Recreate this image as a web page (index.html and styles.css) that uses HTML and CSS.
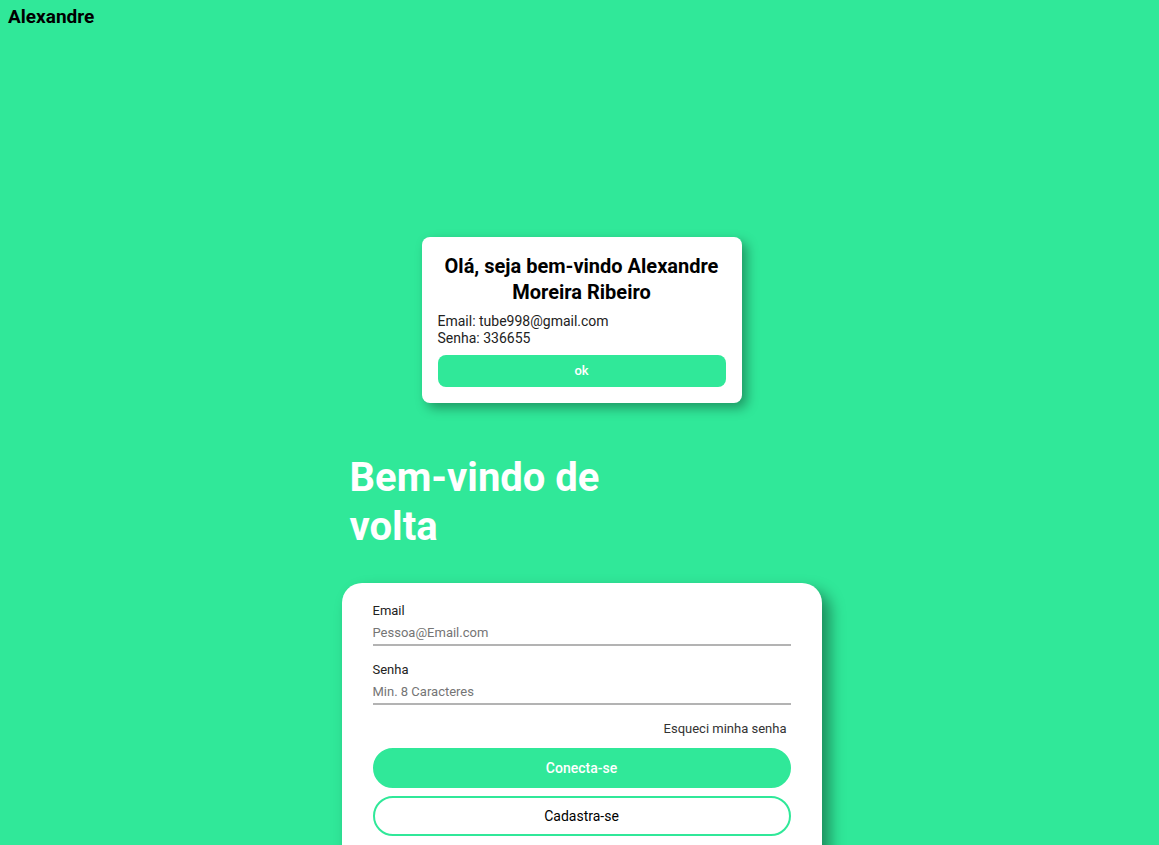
FILE: index.html
```
<!DOCTYPE html>
<html lang="pt-BR">
<head>
<meta charset="utf-8">
<title>Login</title>
<link rel="stylesheet" href="styles.css">
</head>
<body>
<header class="topbar"><h3 class="brand">Alexandre</h3></header>
<main class="page">
  <section class="welcome">
    <h2 class="welcome-title">Olá, seja bem-vindo Alexandre Moreira Ribeiro</h2>
    <p class="welcome-line">Email: tube998@gmail.com</p>
    <p class="welcome-line">Senha: 336655</p>
    <button class="welcome-ok" type="button">ok</button>
  </section>
  <section class="login">
    <h1 class="login-title">Bem-vindo de volta</h1>
    <form class="card">
      <div class="field">
        <label class="field-label" for="email">Email</label>
        <input class="field-input" id="email" type="email" placeholder="Pessoa@Email.com">
      </div>
      <div class="field">
        <label class="field-label" for="senha">Senha</label>
        <input class="field-input" id="senha" type="password" placeholder="Min. 8 Caracteres">
      </div>
      <a class="forgot" href="#">Esqueci minha senha</a>
      <button class="btn btn-primary" type="submit">Conecta-se</button>
      <button class="btn btn-outline" type="button">Cadastra-se</button>
    </form>
  </section>
</main>
</body>
</html>
```

FILE: styles.css
```
* {
  box-sizing: border-box;
  margin: 0;
  padding: 0;
}

body {
  background: #30e899;
  color: #000;
  font-family: Roboto, sans-serif;
  font-size: 14px;
}

/* The page scrolls without a visible scrollbar. */
html {
  scrollbar-width: none;
}

.topbar {
  padding: 6px 8px 4px;
}

.brand {
  font-size: 19px;
  line-height: 22px;
}

.page {
  display: flex;
  flex-direction: column;
  align-items: center;
  padding: 205px 0 16px 4px;
}

.welcome {
  width: 320px;
  max-width: 100%;
  padding: 16px;
  background: #fff;
  border-radius: 8px;
  box-shadow: 5px 5px 12px rgba(0, 0, 0, 0.35);
}

.welcome-title {
  margin-bottom: 8px;
  font-size: 20px;
  line-height: 26px;
  text-align: center;
}

.welcome-line {
  color: #222;
  font-size: 14px;
  line-height: 17px;
}

.welcome-ok {
  display: block;
  width: 100%;
  height: 32px;
  margin-top: 8px;
  padding-bottom: 2px;
  border: 0;
  border-radius: 8px;
  background: #30e899;
  color: #fff;
  font: 500 13px Roboto, sans-serif;
}

.login {
  width: 480px;
  max-width: 100%;
  margin-top: 50px;
}

.login-title {
  max-width: 300px;
  margin: 0 0 32px 8px;
  color: #fff;
  font-size: 40px;
  line-height: 49px;
}

.card {
  display: flex;
  flex-direction: column;
  padding: 20px 31px 32px;
  background: #fff;
  border-radius: 20px;
  box-shadow: 8px 8px 15px rgba(0, 0, 0, 0.4);
}

.field {
  display: flex;
  flex-direction: column;
  margin-bottom: 16px;
}

.field-label {
  color: #222;
  font-size: 13px;
  line-height: 16px;
}

.field-input {
  height: 27px;
  padding-top: 2px;
  border: 0;
  border-bottom: 2px solid #b3b3b3;
  background: transparent;
  font: 13px Roboto, sans-serif;
}

.field-input::placeholder {
  color: #757575;
}

.forgot {
  align-self: flex-end;
  margin-right: 4px;
  color: #333;
  font-size: 13px;
  line-height: 16px;
  text-decoration: none;
}

.btn {
  height: 40px;
  border: 2px solid #30e899;
  border-radius: 20px;
  font: 14px Roboto, sans-serif;
}

.btn-primary {
  margin-top: 11px;
  background: #30e899;
  color: #fff;
  font-weight: 500;
}

.btn-outline {
  margin-top: 8px;
  background: #fff;
  color: #000;
}
```
